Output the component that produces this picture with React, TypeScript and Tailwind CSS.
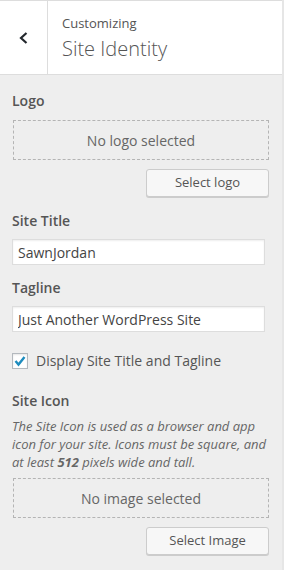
import React from "react";

const font = { fontFamily: "'Open Sans', 'Noto Sans', sans-serif" };

function MediaControl({ empty, button }: { empty: string; button: string }) {
  return (
    <div className="flex flex-col">
      <div className="ml-[1px] h-[40px] border border-dashed border-[#b4b4b4] flex items-center justify-center text-[14px] text-[#666]">
        {empty}
      </div>
      <div className="flex justify-end mt-[9px]">
        <button className="w-[123px] h-[28px] rounded-[3px] border border-[#ccc] bg-[#f7f7f7] shadow-[0_1px_0_#ccc] text-[13px] text-[#555]">
          {button}
        </button>
      </div>
    </div>
  );
}

export default function App() {
  return (
    <div className="w-[284px] min-h-[570px] flex bg-[#eeeeee]" style={font}>
      <div className="w-[282px] flex flex-col">
        <header className="h-[75px] bg-white border-t border-b border-[#dddddd] flex">
          <button className="w-[48px] border-r border-[#dddddd] flex items-center justify-center">
            <svg width="12" height="14" viewBox="0 0 12 14" className="ml-[1px]">
              <polyline points="8.5,2 3,7 8.5,12" fill="none" stroke="#23282d" strokeWidth="2.2" />
            </svg>
          </button>
          <div className="pl-[14px] pt-[13px] flex flex-col">
            <span className="text-[13px] leading-[18px] text-[#555]">Customizing</span>
            <span className="mt-[3px] text-[20px] leading-[28px] font-light text-[#555]">Site Identity</span>
          </div>
        </header>

        <div className="pl-[12px] pr-[13px] pt-[16px] flex flex-col text-[#555]">
          <div className="text-[14px] leading-[20px] font-semibold mb-[9px]">Logo</div>
          <MediaControl empty="No logo selected" button="Select logo" />

          <div className="mt-[14px] text-[14px] leading-[20px] font-semibold mb-[8px]">Site Title</div>
          <input
            readOnly
            value="SawnJordan"
            className="w-[253px] h-[26px] border border-[#dddddd] bg-white px-[5px] text-[14px] text-[#444] shadow-[inset_0_1px_2px_rgba(0,0,0,0.07)] outline-none"
            style={font}
          />

          <div className="mt-[13px] text-[14px] leading-[20px] font-semibold mb-[8px]">Tagline</div>
          <input
            readOnly
            value="Just Another WordPress Site"
            className="w-[253px] h-[26px] border border-[#dddddd] bg-white px-[5px] text-[14px] text-[#444] shadow-[inset_0_1px_2px_rgba(0,0,0,0.07)] outline-none"
            style={font}
          />

          <label className="mt-[19px] flex items-center gap-[8px]">
            <span className="w-[16px] h-[16px] border border-[#b4b9be] bg-white flex items-center justify-center shadow-[inset_0_1px_2px_rgba(0,0,0,0.1)]">
              <svg width="14" height="14" viewBox="0 0 14 14">
                <polyline points="2.5,7 5.5,10.5 11.5,3" fill="none" stroke="#1e8cbe" strokeWidth="2.4" />
              </svg>
            </span>
            <span className="text-[14px] leading-[20px] text-[#555]">Display Site Title and Tagline</span>
          </label>

          <div className="mt-[20px] text-[14px] leading-[20px] font-semibold">Site Icon</div>
          <p className="mt-[6px] text-[13px] leading-[18px] italic text-[#666]">
            The Site Icon is used as a browser and app icon for your site. Icons must be square, and at least{" "}
            <strong className="font-bold">512</strong> pixels wide and tall.
          </p>
          <div className="mt-[7px]">
            <MediaControl empty="No image selected" button="Select Image" />
          </div>
        </div>
      </div>
      <div className="w-[2px] bg-[#e6e6e6]" />
    </div>
  );
}
